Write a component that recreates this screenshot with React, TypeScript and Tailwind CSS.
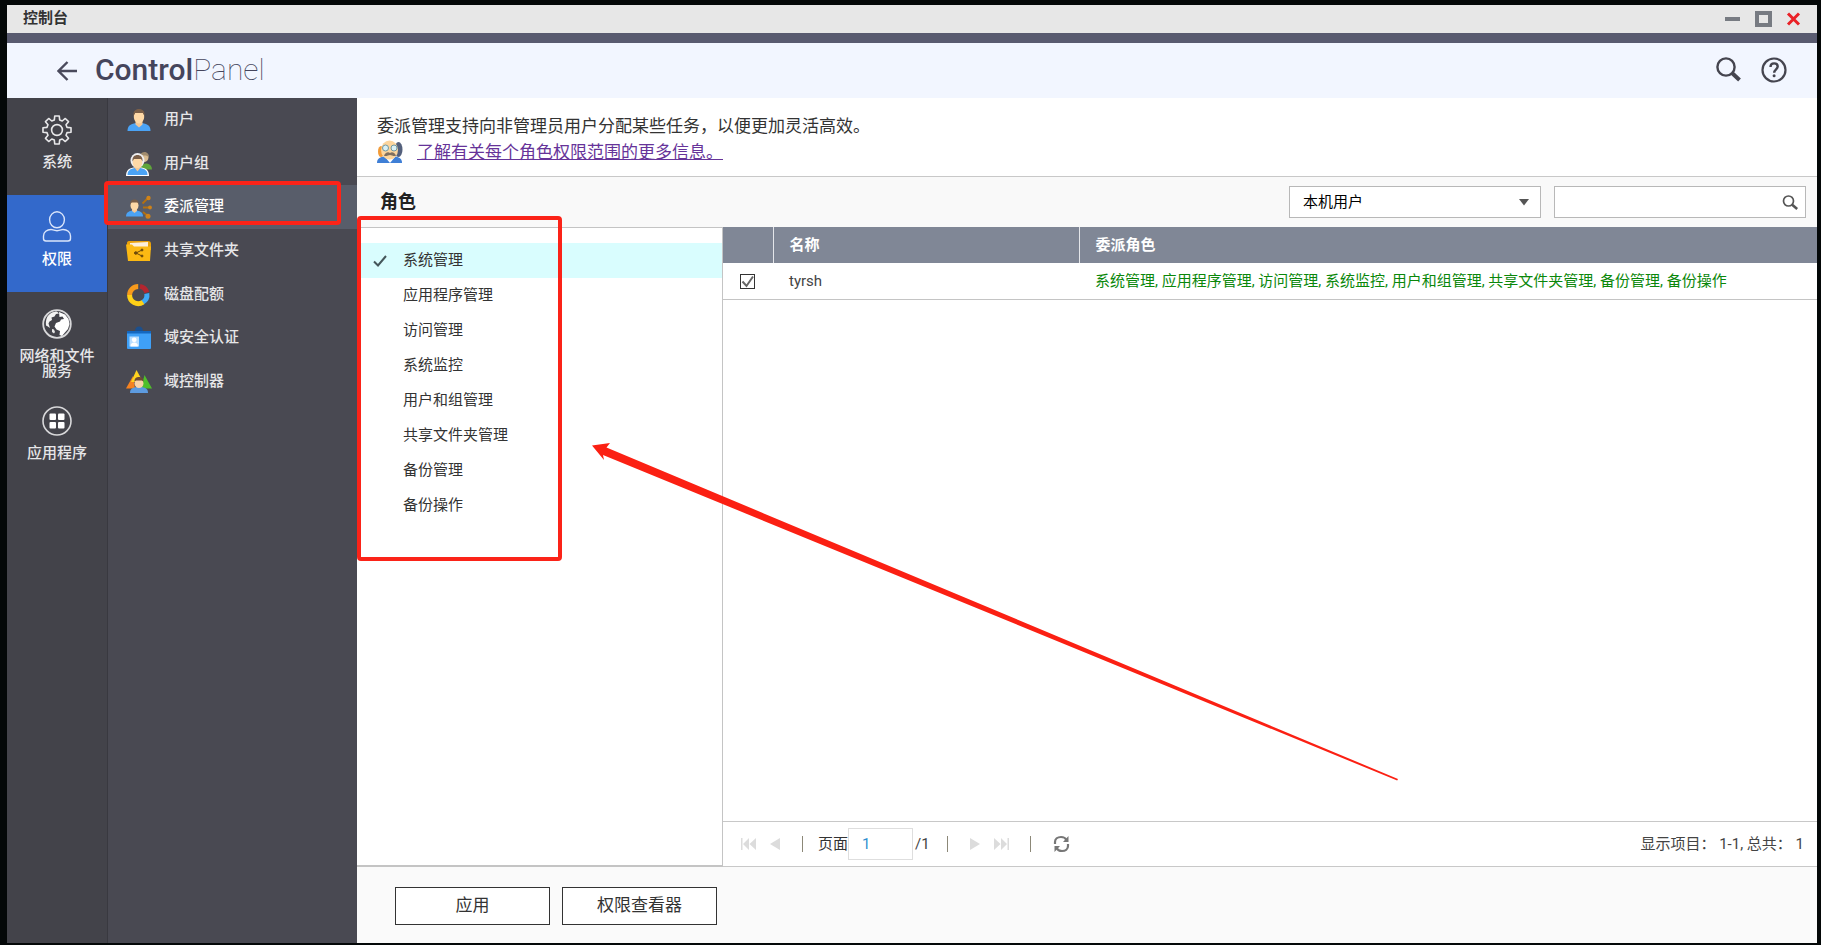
import type { ReactNode } from "react";

const gearPoints = () => {
  const points: string[] = [];
  const add = (radius: number, angle: number) =>
    points.push(
      `${(15 + radius * Math.cos(angle)).toFixed(2)},${(15 + radius * Math.sin(angle)).toFixed(2)}`
    );
  for (let i = 0; i < 8; i++) {
    const a = (i * Math.PI) / 4;
    add(10.4, a - 0.26);
    add(14.2, a - 0.16);
    add(14.2, a + 0.16);
    add(10.4, a + 0.26);
  }
  return points.join(" ");
};

const GearIcon = () => (
  <svg width="30" height="30" viewBox="0 0 30 30" fill="none" stroke="#e8e8ea" strokeWidth="1.6" strokeLinejoin="round">
    <polygon points={gearPoints()} />
    <circle cx="15" cy="15" r="5.4" />
  </svg>
);

const PersonIcon = () => (
  <svg width="30" height="31" viewBox="0 0 30 31" fill="none" stroke="#dbe6fb" strokeWidth="1.4">
    <ellipse cx="15" cy="8.8" rx="7.4" ry="8" />
    <path d="M9 18.500c-4 0-7.500 2.500-7.500 6.500v2.500c0 1.500 1 2.500 2.500 2.500h22c1.500 0 2.500-1 2.500-2.500V25c0-4-3.500-6.500-7.500-6.500-1.600 0-2.800 1.200-6 1.200s-4.400-1.200-6-1.200z" />
  </svg>
);

const GlobeIcon = () => (
  <svg width="30" height="30" viewBox="0 0 30 30">
    <circle cx="15" cy="15" r="13.8" fill="none" stroke="#d8d8da" strokeWidth="1.800" />
    <path
      d="M5 8.500C7 4.500 11 2.500 15 2.500l2 2-3 .5-1.500 2.500-3 1 .5 2.500-2.500 1.500-1 2 1.500 4.500-3-2C3.500 17.500 3.500 12 5 8.500z"
      fill="#f2f2f2"
    />
    <path
      d="M17 3l6 2.500 3.500 4.500 1 5-1.500 5-3.500 4-2.500 3-2.500-1 .5-4-3.500-1.500-2-3 1.500-3.500 4-1.500 1-2 3-.5-1.500-2.500-3 .5z"
      fill="#fff"
    />
    <path d="M10 20l2 .5 1 2.500-1 1.500-2-1.500z" fill="#e6e6e6" />
  </svg>
);

const AppsIcon = () => (
  <svg width="30" height="30" viewBox="0 0 30 30">
    <circle cx="15" cy="15" r="14" fill="none" stroke="#d8d8da" strokeWidth="1.600" />
    <g fill="#fff">
      <rect x="7.500" y="7.500" width="6.500" height="6.500" rx="1" />
      <rect x="16" y="7.500" width="6.500" height="6.500" rx="1" />
      <rect x="7.500" y="16" width="6.500" height="6.500" rx="1" />
      <rect x="16" y="16" width="6.500" height="6.500" rx="1" />
    </g>
  </svg>
);

const UserIcon = () => (
  <svg width="26" height="24" viewBox="0 0 26 24">
    <path d="M1.500 23c0-5 2.500-7 8.500-8h6c6 1 8.500 3 8.500 8z" fill="#4ba3f5" />
    <path d="M9.500 14h7v2.500l-3.500 3-3.500-3z" fill="#f3c695" />
    <ellipse cx="13" cy="9" rx="5.200" ry="6.500" fill="#ffd9a6" />
    <path d="M7.500 8C7 3 9.500 1 13 1s6 2 5.500 7L17 5H9z" fill="#7b5f48" />
  </svg>
);

const GroupIcon = () => (
  <svg width="26" height="24" viewBox="0 0 26 24">
    <path d="M14 16c1-3 4-5 7-4.500 3 .5 5 2.500 5 6H15z" fill="#5fa53a" />
    <circle cx="18" cy="5.500" r="4.500" fill="#d9bb90" />
    <path d="M14 3.500C15 1 16.500 0 18.500 0s4.500 1.500 4.500 5l-3-1.500z" fill="#a08b6e" />
    <ellipse cx="11.500" cy="8.500" rx="7" ry="7.500" fill="#eeeef0" />
    <path d="M0 24c0-5 2-7.500 7.500-8.500h8C21 16.500 23 19 23 24z" fill="#fff" />
    <path d="M1.500 23c0-4 2-6 7-7h6c5 1 7 3 7 7z" fill="#4ba3f5" />
    <path d="M8 15h7l-3.500 4.500z" fill="#f3c695" />
    <ellipse cx="11.500" cy="10.500" rx="4.800" ry="5.500" fill="#ffd9a6" />
    <path d="M6.500 9.500C6 5 8.500 3 11.500 3s5.500 2 5 6.500L15 7H8z" fill="#7b5f48" />
  </svg>
);

const DelegateIcon = () => (
  <svg width="26" height="24" viewBox="0 0 26 24">
    <path d="M0 21.500c0-3.500 2-5 6-6h5c4 1 6 2.500 6 6z" fill="#4ba3f5" />
    <path d="M6 14h5v2l-2.500 2L6 16z" fill="#f3c695" />
    <ellipse cx="8.500" cy="10.500" rx="4" ry="5" fill="#ffd9a6" />
    <path d="M4.200 9.500C4 6 6 4.500 8.500 4.500s4.500 1.500 4.300 5l-1.300-2H5.500z" fill="#7b5f48" />
    <g stroke="#b4700f" strokeWidth="1.800">
      <path d="M16.500 8.500l5-5M17 12.500h7M17 17l5 4" />
    </g>
    <g fill="#cf8319">
      <circle cx="22.500" cy="3" r="2.200" />
      <circle cx="24" cy="12.500" r="1.900" />
      <circle cx="22" cy="21.300" r="2.500" />
    </g>
  </svg>
);

const FolderIcon = () => (
  <svg width="26" height="24" viewBox="0 0 26 24">
    <path d="M1 4c0-1 .5-2 2-2h19c2 0 3 1 3 3v6H1z" fill="#e9a10b" />
    <path d="M4 4l18-1v5H4z" fill="#fdeeda" />
    <path d="M0 5.500h6l2 2h17L24 22H2z" fill="#fcb913" />
    <g fill="#6d4a0a" stroke="#6d4a0a" strokeWidth="1">
      <path d="M16 11l-6 3 6 3" fill="none" />
      <circle cx="9.800" cy="14" r="1.300" />
      <circle cx="16" cy="11" r="1" />
      <circle cx="16" cy="17" r="1" />
    </g>
  </svg>
);

const QuotaIcon = () => (
  <svg width="26" height="24" viewBox="0 0 26 24" fill="none" strokeWidth="5">
    <path d="M3.600 12A8.600 8.600 0 0 1 12.200 3.400" stroke="#f79a1c" />
    <path d="M14 3.400A8.600 8.600 0 0 1 20.800 9.500" stroke="#b3262f" />
    <path d="M20.800 10.500A8.600 8.600 0 0 1 16.500 19.400" stroke="#3fa9f5" />
    <path d="M17 19.200A8.600 8.600 0 0 1 3.600 12" stroke="#ffd117" />
  </svg>
);

const BadgeIcon = () => (
  <svg width="26" height="24" viewBox="0 0 26 24">
    <path d="M9 5.500C9 2 10.500.500 13 .500s4 1.500 4 5z" fill="#1c4f8c" />
    <rect x="1" y="5" width="24" height="18" rx="1" fill="#3fa0f7" />
    <path d="M1 5h24v2.500H1z" fill="#1467bf" />
    <rect x="3.500" y="10.500" width="9.500" height="10" fill="#b9deff" />
    <circle cx="8.200" cy="13.800" r="2.400" fill="#fff" />
    <path d="M4.500 20.500c0-3 1.500-4 3.700-4s3.700 1 3.700 4z" fill="#fff" />
  </svg>
);

const DomainIcon = () => (
  <svg width="26" height="24" viewBox="0 0 26 24">
    <path d="M7 6L0 18.500h9z" fill="#f58220" />
    <path d="M18.500 5L26 18.500H15z" fill="#4fbf2a" />
    <path d="M10.500 0L17 12H5z" fill="#ffd21f" />
    <path d="M4 23c0-4 2-5 6-6h6c4 1 6 2 6 6z" fill="#5d9be0" />
    <circle cx="13" cy="13.500" r="4.500" fill="#fbd3a7" />
    <path d="M8.500 11.500C8.500 8 10.500 7 13 7s4.500 1 4.500 4.500l-1.500-1h-6z" fill="#6d4a33" />
  </svg>
);

const ProfessorIcon = () => (
  <svg width="26" height="24" viewBox="0 0 26 24">
    <path d="M0 23c0-4 2-5.500 6-6.500h13c4 1 6 2.500 6 6.500z" fill="#3f7fd6" />
    <path d="M8 17l5 6 5-6z" fill="#fff" />
    <ellipse cx="4" cy="11.500" rx="3" ry="5.500" fill="#f29b38" />
    <ellipse cx="21.500" cy="9.500" rx="4" ry="7.500" fill="#54607c" />
    <ellipse cx="12.500" cy="10" rx="8.500" ry="9.500" fill="#fcd59d" />
    <circle cx="8.500" cy="8" r="3" fill="#d9f0f5" stroke="#6f98a3" />
    <circle cx="17" cy="8" r="3" fill="#d9f0f5" stroke="#6f98a3" />
    <path d="M7 16c1-3.500 4-4.500 6-3 2-1.500 5-.5 6 3-3 .5-4.500-1-6-1s-3 1.500-6 1z" fill="#80705f" />
  </svg>
);

type SectionItem = { label: string; icon: ReactNode; active?: boolean };

const sections: SectionItem[] = [
  { label: "系统", icon: <GearIcon /> },
  { label: "权限", icon: <PersonIcon />, active: true },
  { label: "网络和文件服务", icon: <GlobeIcon /> },
  { label: "应用程序", icon: <AppsIcon /> },
];

const menu: SectionItem[] = [
  { label: "用户", icon: <UserIcon /> },
  { label: "用户组", icon: <GroupIcon /> },
  { label: "委派管理", icon: <DelegateIcon />, active: true },
  { label: "共享文件夹", icon: <FolderIcon /> },
  { label: "磁盘配额", icon: <QuotaIcon /> },
  { label: "域安全认证", icon: <BadgeIcon /> },
  { label: "域控制器", icon: <DomainIcon /> },
];

const roles = [
  "系统管理",
  "应用程序管理",
  "访问管理",
  "系统监控",
  "用户和组管理",
  "共享文件夹管理",
  "备份管理",
  "备份操作",
];

const TitleBar = () => (
  <div className="flex h-7 items-center justify-between bg-[#e7e7e7] px-4">
    <h1 className="pb-0.5 text-[15px] leading-5 font-bold text-[#333]">控制台</h1>
    <div className="flex items-center gap-3.5">
      <button aria-label="最小化">
        <svg width="17" height="16" viewBox="0 0 17 16">
          <rect x="1" y="6" width="15" height="4" fill="#777b82" />
        </svg>
      </button>
      <button aria-label="最大化">
        <svg width="17" height="16" viewBox="0 0 17 16" fill="none">
          <rect x="2" y="2" width="13" height="12" stroke="#777b82" strokeWidth="4" />
        </svg>
      </button>
      <button aria-label="关闭">
        <svg width="15" height="14" viewBox="0 0 15 14">
          <path d="M2 1.500l11 11M13 1.500l-11 11" stroke="#ea2127" strokeWidth="3" />
        </svg>
      </button>
    </div>
  </div>
);

const Header = () => (
  <header className="flex h-[55px] items-center justify-between bg-[#f2f6ff] pl-[50px] pr-[30px]">
    <div className="flex items-center gap-[18px]">
      <button aria-label="返回">
        <svg width="20" height="20" viewBox="0 0 20 20" fill="none" stroke="#4a4a5c" strokeWidth="2.400">
          <path d="M10.500 1L1.500 10l9 9M1.500 10H20" />
        </svg>
      </button>
      <div className="pb-0.5 text-[30px] leading-9 text-[#45455c]">
        <span className="font-medium">Control</span>
        <span className="font-thin">Panel</span>
      </div>
    </div>
    <div className="flex items-center gap-5 pb-0.5">
      <button aria-label="搜索">
        <svg width="25" height="25" viewBox="0 0 25 25" fill="none" stroke="#45454f">
          <circle cx="10" cy="10" r="8.600" strokeWidth="2.400" />
          <path d="M16 16l7.500 7" strokeWidth="4" />
        </svg>
      </button>
      <button aria-label="帮助">
        <svg width="26" height="26" viewBox="0 0 26 26" fill="none" stroke="#45454f">
          <circle cx="13" cy="13" r="11.500" strokeWidth="2.200" />
          <path d="M9.500 10c0-2.300 1.500-3.600 3.600-3.600s3.600 1.200 3.600 3.200c0 2.600-3.500 3-3.500 6.200" strokeWidth="2.400" />
          <circle cx="13.100" cy="18.800" r="1.500" fill="#45454f" stroke="none" />
        </svg>
      </button>
    </div>
  </header>
);

const SectionNav = () => (
  <nav className="flex w-[100px] shrink-0 flex-col bg-[#43434a]">
    {sections.map((item) => (
      <a
        key={item.label}
        href="#"
        className={`flex min-h-[97px] flex-col items-center px-3 text-center text-[15px] leading-[15px] font-medium ${
          item.active ? "bg-[#3369cb] text-white" : "text-[#e6e6e8]"
        }`}
      >
        <span className="flex h-[57px] items-end justify-center pb-2.5">{item.icon}</span>
        {item.label}
      </a>
    ))}
  </nav>
);

const MenuNav = () => (
  <nav className="w-[250px] shrink-0 border-l border-[#393940] bg-[#494952]">
    <div className="grid h-[306px] grid-rows-7">
      {menu.map((item) => (
        <a
          key={item.label}
          href="#"
          className={`relative flex items-center gap-3 pl-[18px] text-[15px] leading-5 font-medium ${
            item.active ? "bg-[#585d6a] text-white" : "text-[#e6e6e8]"
          }`}
        >
          {item.icon}
          <span className="pb-0.5">{item.label}</span>
          {item.active && (
            <span className="absolute -left-1 -top-1 right-4 bottom-1 rounded border-4 border-[#fb2318]" />
          )}
        </a>
      ))}
    </div>
  </nav>
);

const RoleList = () => (
  <div className="relative w-[366px] shrink-0 border-t border-r border-b-2 border-[#c4c4c4] pt-[15px]">
    <ul>
      {roles.map((role, i) => (
        <li key={role}>
          <button
            className={`flex h-[35px] w-full items-center pl-4 text-left text-[15px] text-[#333] ${
              i === 0 ? "bg-[#d9fdfe]" : ""
            }`}
          >
            <span className="w-[30px]">
              {i === 0 && (
                <svg width="14" height="12" viewBox="0 0 14 12" fill="none" stroke="#44565a" strokeWidth="2">
                  <path d="M1 6.500l4 4L13 1" />
                </svg>
              )}
            </span>
            <span>{role}</span>
          </button>
        </li>
      ))}
    </ul>
    <div className="absolute -top-3 left-0 h-[345px] w-[205px] rounded border-4 border-[#fb2318]" />
  </div>
);

const UserTable = () => (
  <table className="w-full table-fixed border-collapse text-left text-[15px] leading-5">
    <colgroup>
      <col className="w-[50px]" />
      <col className="w-[306px]" />
      <col />
    </colgroup>
    <thead>
      <tr className="h-9 bg-[#808796] text-white">
        <th aria-label="选择" />
        <th className="border-l border-[#e4e6ea] pl-4 font-bold">名称</th>
        <th className="border-l border-[#e4e6ea] pl-4 font-bold">委派角色</th>
      </tr>
    </thead>
    <tbody>
      <tr className="h-9 border-b border-[#c4c4c4]">
        <td className="pl-[17px]">
          <label className="relative mt-0.5 block h-[15px] w-[15px]">
            <input
              type="checkbox"
              defaultChecked
              aria-label="tyrsh"
              className="peer block h-[15px] w-[15px] appearance-none border border-[#333] bg-white"
            />
            <svg
              className="absolute inset-0 hidden peer-checked:block"
              width="15"
              height="15"
              viewBox="0 0 15 15"
              fill="none"
              stroke="#666"
              strokeWidth="2"
            >
              <path d="M2.500 7.500l4 4.500 6.500-9.500" />
            </svg>
          </label>
        </td>
        <td className="pl-4 text-[#444]">tyrsh</td>
        <td className="truncate pl-4 text-[#0a870a]">{roles.join(", ")}</td>
      </tr>
    </tbody>
  </table>
);

const Separator = () => <span className="h-4 w-px bg-[#8c8878]" />;

const Pager = () => (
  <div className="flex h-[46px] items-center justify-between border-y border-[#c8c8c8] pr-[13px] pl-[18px] text-[15px] text-[#444]">
    <div className="flex items-center">
      <button aria-label="首页" className="mr-3.5">
        <svg width="15" height="12" viewBox="0 0 15 12" fill="#dcdcdc">
          <path d="M0 0h1.500v12H0zM8 0v12L2 6zM15 0v12L8.500 6z" />
        </svg>
      </button>
      <button aria-label="上一页" className="mr-[22px]">
        <svg width="10" height="12" viewBox="0 0 10 12" fill="#dcdcdc">
          <path d="M10 0v12L0 6z" />
        </svg>
      </button>
      <Separator />
      <label htmlFor="page" className="ml-[15px] text-[#333]">
        页面
      </label>
      <input
        id="page"
        defaultValue="1"
        className="h-8 w-[65px] border border-[#dedede] bg-white px-[13px] text-[#2f8fd0]"
      />
      <span className="mr-[17px] ml-0.5">/1</span>
      <Separator />
      <button aria-label="下一页" className="mr-3.5 ml-[22px]">
        <svg width="10" height="12" viewBox="0 0 10 12" fill="#dcdcdc">
          <path d="M0 0v12l10-6z" />
        </svg>
      </button>
      <button aria-label="末页" className="mr-[21px]">
        <svg width="15" height="12" viewBox="0 0 15 12" fill="#dcdcdc">
          <path d="M15 0h-1.500v12H15zM7 0v12l6-6zM0 0v12l6.500-6z" />
        </svg>
      </button>
      <Separator />
      <button aria-label="刷新" className="ml-[22px]">
        <svg width="17" height="18" viewBox="0 0 17 18" fill="none" stroke="#777" strokeWidth="2.200">
          <path d="M2 9V7c0-3 2.500-5 6-5 2.500 0 4.500 1 5.500 3" />
          <path d="M15 9v2c0 3-2.500 5-6 5-2.500 0-4.500-1-5.500-3" />
          <path d="M15.500 1v6H10zM1.500 17v-6H7z" fill="#777" stroke="none" />
        </svg>
      </button>
    </div>
    <p>显示项目： 1-1, 总共： 1</p>
  </div>
);

const App = () => {
  return (
    <div className="flex min-h-screen bg-[#040808] pt-[5px] pr-1 pb-0.5 pl-[7px] font-['Roboto','Noto_Sans_CJK_SC',sans-serif]">
      <div className="relative flex min-w-0 flex-1 flex-col bg-white">
        <TitleBar />
        <div className="h-2.5 bg-[#595b70]" />
        <Header />
        <div className="flex flex-1">
          <SectionNav />
          <MenuNav />
          <main className="flex min-w-0 flex-1 flex-col">
            <section className="border-b border-[#c8c8c8] px-5 pt-[15px] pb-[11px] text-[17px] leading-[26px] text-[#333]">
              <p>委派管理支持向非管理员用户分配某些任务，以便更加灵活高效。</p>
              <p className="flex items-center gap-3.5">
                <ProfessorIcon />
                <a href="#" className="text-[#663399] underline">
                  了解有关每个角色权限范围的更多信息。
                </a>
              </p>
            </section>
            <section className="flex h-[50px] items-center justify-between bg-[#f9f9f9] pr-[11px] pl-[23px]">
              <h2 className="text-[18px] leading-6 font-bold text-[#222]">角色</h2>
              <div className="flex gap-[13px]">
                <div className="relative">
                  <select
                    aria-label="用户类型"
                    className="block h-8 w-[252px] appearance-none border border-[#b8b8b8] bg-white pl-[13px] text-[15px] text-black"
                  >
                    <option>本机用户</option>
                  </select>
                  <svg className="pointer-events-none absolute top-3 right-3" width="10" height="8" viewBox="0 0 10 8">
                    <path d="M0 1h10L5 7.500z" fill="#555" />
                  </svg>
                </div>
                <div className="relative">
                  <input
                    type="text"
                    aria-label="搜索用户"
                    className="block h-8 w-[252px] border border-[#b8b8b8] bg-white pr-8 pl-3 text-[15px]"
                  />
                  <svg
                    className="pointer-events-none absolute top-2 right-2"
                    width="16"
                    height="16"
                    viewBox="0 0 16 16"
                    fill="none"
                    stroke="#555"
                  >
                    <circle cx="6.500" cy="7" r="5" strokeWidth="1.700" />
                    <path d="M10.200 10.800l5 4.200" strokeWidth="2.600" />
                  </svg>
                </div>
              </div>
            </section>
            <div className="flex flex-1">
              <RoleList />
              <div className="flex min-w-0 flex-1 flex-col">
                <UserTable />
                <div className="flex-1" />
                <Pager />
              </div>
            </div>
            <footer className="flex items-start gap-3 bg-[#fafafa] pt-5 pb-[18px] pl-[38px]">
              <button className="h-[38px] w-[155px] border border-[#333] bg-white text-[17px] text-[#333]">
                应用
              </button>
              <button className="h-[38px] w-[155px] border border-[#333] bg-white text-[17px] text-[#333]">
                权限查看器
              </button>
            </footer>
          </main>
        </div>

        {/* arrow pointing at the role list */}
        <svg className="pointer-events-none absolute top-[438px] left-[585px]" width="806" height="338" viewBox="0 0 806 338">
          <path d="M0 2.500L18 0l-3.500 4.500L806 336l-.8 1.500L11 12l1 5z" fill="#fb2013" />
        </svg>
      </div>
    </div>
  );
};

export default App;
